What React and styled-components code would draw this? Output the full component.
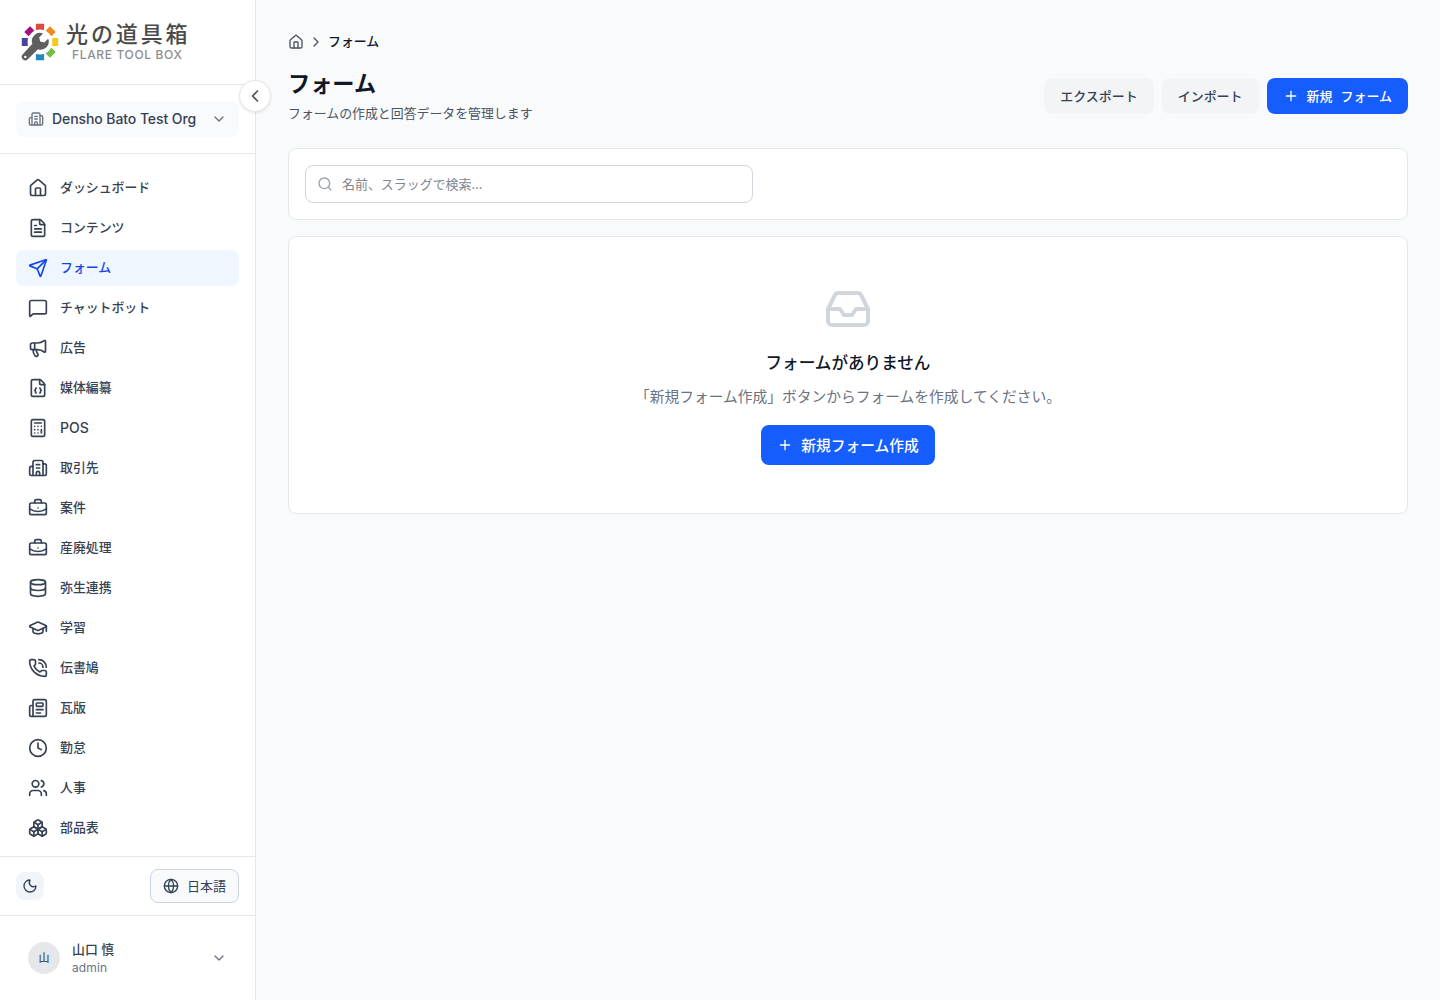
import React from "react";
import styled, { createGlobalStyle } from "styled-components";
import {
  Boxes,
  BriefcaseBusiness,
  Building2,
  Calculator,
  ChevronDown,
  ChevronLeft,
  ChevronRight,
  Clock4,
  Database,
  FileBraces,
  FileText,
  Globe,
  GraduationCap,
  House,
  Inbox,
  Megaphone,
  MessageSquare,
  Moon,
  Newspaper,
  PhoneCall,
  Plus,
  Search,
  Send,
  Users,
} from "lucide-react";

const navItems = [
  { label: "ダッシュボード", icon: House },
  { label: "コンテンツ", icon: FileText },
  { label: "フォーム", icon: Send, active: true },
  { label: "チャットボット", icon: MessageSquare },
  { label: "広告", icon: Megaphone },
  { label: "媒体編纂", icon: FileBraces },
  { label: "POS", icon: Calculator, latin: true },
  { label: "取引先", icon: Building2 },
  { label: "案件", icon: BriefcaseBusiness },
  { label: "産廃処理", icon: BriefcaseBusiness },
  { label: "弥生連携", icon: Database },
  { label: "学習", icon: GraduationCap },
  { label: "伝書鳩", icon: PhoneCall },
  { label: "瓦版", icon: Newspaper },
  { label: "勤怠", icon: Clock4 },
  { label: "人事", icon: Users },
  { label: "部品表", icon: Boxes },
];

const ringTiles = [
  { angle: 0, color: "#dc4a3d" },
  { angle: 45, color: "#f08a1c" },
  { angle: 90, color: "#f5c81e" },
  { angle: 135, color: "#77bc3f" },
  { angle: 180, color: "#2389bd" },
  { angle: 270, color: "#46449c" },
  { angle: 315, color: "#a60f7c" },
];

function LogoMark() {
  return (
    <svg width="38" height="38" viewBox="0 0 38 38">
      {ringTiles.map((tile) => (
        <path
          key={tile.angle}
          d="M14.9 0.8 H23.1 V6.9 Q19 6.3 14.9 6.9 Z"
          fill={tile.color}
          transform={`rotate(${tile.angle} 19 19)`}
        />
      ))}
      <path
        d="M22 10.6 a8 8 0 0 0 -10.6 10.2 L1.8 31.2 a3.5 3.5 0 0 0 5 5 L17 26.2 a8 8 0 0 0 10.2 -10.4 L23.2 19.6 L19.2 18.6 L18.2 14.6 Z"
        fill="#5f5f5f"
      />
      <circle cx="4.3" cy="33.9" r="1.2" fill="#fff" />
    </svg>
  );
}

export default function App() {
  return (
    <Layout>
      <GlobalStyle />
      <Sidebar>
        <Brand>
          <LogoMark />
          <BrandText>
            <BrandName>光の道具箱</BrandName>
            <BrandSub>FLARE TOOL BOX</BrandSub>
          </BrandText>
        </Brand>
        <CollapseButton>
          <ChevronLeft size={20} />
        </CollapseButton>
        <OrgSection>
          <OrgButton>
            <Building2 size={16} />
            <span>Densho Bato Test Org</span>
            <ChevronDown size={16} />
          </OrgButton>
        </OrgSection>
        <Nav>
          {navItems.map(({ label, icon: Icon, active, latin }) => (
            <NavItem key={label} $active={active} $latin={latin}>
              <Icon size={20} />
              <span>{label}</span>
            </NavItem>
          ))}
        </Nav>
        <Preferences>
          <ThemeButton>
            <Moon size={16} />
          </ThemeButton>
          <LanguageButton>
            <Globe size={16} />
            <span>日本語</span>
          </LanguageButton>
        </Preferences>
        <UserSection>
          <Avatar>山</Avatar>
          <UserText>
            <UserName>山口 慎</UserName>
            <UserRole>admin</UserRole>
          </UserText>
          <ChevronDown size={16} />
        </UserSection>
      </Sidebar>
      <Main>
        <Breadcrumb>
          <House size={16} />
          <ChevronRight size={16} />
          <span>フォーム</span>
        </Breadcrumb>
        <PageHeader>
          <div>
            <Title>フォーム</Title>
            <Subtitle>フォームの作成と回答データを管理します</Subtitle>
          </div>
          <Actions>
            <Button>
              <span>エクスポート</span>
            </Button>
            <Button>
              <span>インポート</span>
            </Button>
            <Button $primary>
              <Plus size={16} />
              <span>新規</span>
              <span>フォーム</span>
            </Button>
          </Actions>
        </PageHeader>
        <SearchCard>
          <SearchField>
            <Search size={16} />
            <input placeholder="名前、スラッグで検索..." />
          </SearchField>
        </SearchCard>
        <EmptyCard>
          <Inbox size={48} />
          <EmptyTitle>フォームがありません</EmptyTitle>
          <EmptyText>
            「新規フォーム作成」ボタンからフォームを作成してください。
          </EmptyText>
          <Button $primary $large>
            <Plus size={16} />
            <span>新規フォーム作成</span>
          </Button>
        </EmptyCard>
      </Main>
    </Layout>
  );
}

const GlobalStyle = createGlobalStyle`
  * {
    box-sizing: border-box;
  }

  body {
    margin: 0;
    background: #f9fafb;
    font-family: Inter, "Noto Sans CJK JP", sans-serif;
    -webkit-font-smoothing: antialiased;
  }

  button, input {
    font-family: inherit;
  }

  svg {
    flex-shrink: 0;
  }
`;

const Layout = styled.div`
  display: flex;
  height: 100vh;
  overflow: hidden;
  font-size: 12.9px;
  line-height: 20px;
  color: #364153;
`;

const Sidebar = styled.aside`
  position: relative;
  display: flex;
  flex-direction: column;
  width: 256px;
  flex-shrink: 0;
  background: #fff;
  border-right: 1px solid #e5e7eb;
`;

const Brand = styled.div`
  display: flex;
  align-items: center;
  gap: 7px;
  height: 85px;
  padding: 0 21px;
  border-bottom: 1px solid #e5e7eb;
`;

const BrandText = styled.div`
  display: flex;
  flex-direction: column;
  padding-bottom: 1px;
  white-space: nowrap;
`;

const BrandName = styled.span`
  font-size: 22px;
  line-height: 26px;
  font-weight: 500;
  letter-spacing: 2.9px;
  color: #4a4a4a;
`;

const BrandSub = styled.span`
  padding-left: 6px;
  font-size: 12px;
  line-height: 15px;
  font-weight: 500;
  letter-spacing: 0.65px;
  color: #8e8e8e;
`;

const CollapseButton = styled.button`
  position: absolute;
  top: 80px;
  right: -16px;
  display: flex;
  align-items: center;
  justify-content: center;
  width: 32px;
  height: 32px;
  padding: 0;
  color: #4a5565;
  background: #fff;
  border: 1px solid #e5e7eb;
  border-radius: 50%;
  box-shadow: 0 1px 3px rgba(0, 0, 0, 0.1);
`;

const OrgSection = styled.div`
  padding: 16px;
  border-bottom: 1px solid #e5e7eb;
`;

const OrgButton = styled.button`
  display: flex;
  align-items: center;
  gap: 8px;
  width: 100%;
  height: 36px;
  padding: 0 12px;
  font-size: 14px;
  font-weight: 500;
  letter-spacing: -0.08px;
  color: #364153;
  text-align: left;
  background: #f9fafb;
  border: 0;
  border-radius: 8px;

  span {
    flex: 1;
    padding-bottom: 2px;
    white-space: nowrap;
  }

  svg {
    color: #6a7282;
  }
`;

const Nav = styled.nav`
  flex: 1;
  display: flex;
  flex-direction: column;
  gap: 4px;
  padding: 16px;
  overflow: hidden;
`;

const NavItem = styled.a`
  display: flex;
  align-items: center;
  gap: 12px;
  height: 36px;
  flex-shrink: 0;
  padding: 0 12px;
  font-size: ${(props) => (props.$latin ? "14px" : "12.9px")};
  font-weight: 500;
  color: ${(props) => (props.$active ? "#1447e6" : "#364153")};
  background: ${(props) => (props.$active ? "#eff6ff" : "transparent")};
  border-radius: 8px;
`;

const Preferences = styled.div`
  display: flex;
  align-items: center;
  justify-content: space-between;
  height: 59px;
  padding: 0 16px;
  border-top: 1px solid #e5e7eb;
`;

const ThemeButton = styled.button`
  display: flex;
  align-items: center;
  justify-content: center;
  width: 28px;
  height: 28px;
  padding: 0;
  color: #314158;
  background: #f1f5f9;
  border: 0;
  border-radius: 8px;
`;

const LanguageButton = styled.button`
  display: flex;
  align-items: center;
  gap: 8px;
  height: 34px;
  padding: 0 12px;
  font-size: 13px;
  color: #314158;
  background: #f8fafc;
  border: 1px solid #cad5e2;
  border-radius: 8px;

  span {
    padding-bottom: 2px;
  }
`;

const UserSection = styled.div`
  display: flex;
  align-items: center;
  gap: 12px;
  height: 85px;
  padding: 0 28px;
  border-top: 1px solid #e5e7eb;

  svg {
    color: #6a7282;
  }
`;

const Avatar = styled.div`
  display: flex;
  align-items: center;
  justify-content: center;
  width: 32px;
  height: 32px;
  font-size: 11px;
  font-weight: 500;
  color: #4a5565;
  background: #e5e7eb;
  border-radius: 50%;
`;

const UserText = styled.div`
  flex: 1;
  padding-top: 2px;
`;

const UserName = styled.div`
  font-weight: 500;
  line-height: 18px;
`;

const UserRole = styled.div`
  font-size: 12px;
  line-height: 18px;
  letter-spacing: 0.1px;
  color: #6a7282;
`;

const Main = styled.main`
  flex: 1;
  padding: 32px;
`;

const Breadcrumb = styled.div`
  display: flex;
  align-items: center;
  height: 20px;
  gap: 4px;
  color: #4a5565;

  span {
    font-weight: 500;
    color: #101828;
  }
`;

const PageHeader = styled.header`
  display: flex;
  align-items: center;
  justify-content: space-between;
  height: 56px;
  margin: 16px 0 24px;
`;

const Title = styled.h1`
  margin: 0;
  font-size: 22.2px;
  line-height: 32px;
  font-weight: 700;
  color: #101828;
`;

const Subtitle = styled.p`
  margin: 4px 0 0;
  color: #4a5565;
`;

const Actions = styled.div`
  display: flex;
  gap: 8px;
`;

const Button = styled.button`
  display: flex;
  align-items: center;
  gap: 8px;
  height: ${(props) => (props.$large ? "40px" : "36px")};
  padding: 0 16px;
  font-size: ${(props) => (props.$large ? "14.72px" : "12.97px")};
  font-weight: 500;
  color: ${(props) => (props.$primary ? "#fff" : "#364153")};
  background: ${(props) => (props.$primary ? "#155dfc" : "#f3f4f6")};
  border: 0;
  border-radius: 8px;

  span {
    padding-bottom: 2px;
  }
`;

const Card = styled.section`
  background: #fff;
  border: 1px solid #e5e7eb;
  border-radius: 8px;
`;

const SearchCard = styled(Card)`
  padding: 16px;
`;

const SearchField = styled.label`
  display: flex;
  align-items: center;
  gap: 9px;
  width: 448px;
  height: 38px;
  padding: 0 11px;
  border: 1px solid #d1d5dc;
  border-radius: 8px;

  svg {
    color: #99a1af;
  }

  input {
    flex: 1;
    padding: 0;
    font-size: 12.95px;
    border: 0;
    outline: 0;
    background: none;
  }

  input::placeholder {
    color: #808692;
  }
`;

const EmptyCard = styled(Card)`
  display: flex;
  flex-direction: column;
  align-items: center;
  height: 278px;
  margin-top: 16px;
  padding-top: 48px;

  > svg {
    color: #d1d5dc;
  }
`;

const EmptyTitle = styled.h3`
  margin: 16px 0 8px;
  font-size: 16.6px;
  line-height: 28px;
  font-weight: 500;
  color: #101828;
`;

const EmptyText = styled.p`
  margin: 0 0 16px;
  font-size: 14.76px;
  line-height: 24px;
  color: #6a7282;
`;
